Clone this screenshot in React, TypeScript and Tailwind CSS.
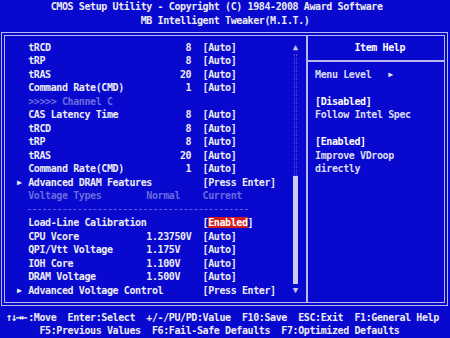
import React from "react";

// 80x25 text screen: one cell = 5.625px x 13.52px

interface ItemRow {
  arrow?: boolean;
  label: string;
  value?: string;
  valueLeft?: boolean;
  setting?: React.ReactNode;
  dim?: boolean;
  dashed?: boolean;
}

const rows: ItemRow[] = [
  { label: "tRCD", value: "8", setting: "[Auto]" },
  { label: "tRP", value: "8", setting: "[Auto]" },
  { label: "tRAS", value: "20", setting: "[Auto]" },
  { label: "Command Rate(CMD)", value: "1", setting: "[Auto]" },
  { label: ">>>>> Channel C", dim: true },
  { label: "CAS Latency Time", value: "8", setting: "[Auto]" },
  { label: "tRCD", value: "8", setting: "[Auto]" },
  { label: "tRP", value: "8", setting: "[Auto]" },
  { label: "tRAS", value: "20", setting: "[Auto]" },
  { label: "Command Rate(CMD)", value: "1", setting: "[Auto]" },
  { arrow: true, label: "Advanced DRAM Features", setting: "[Press Enter]" },
  { label: "Voltage Types", value: "Normal", valueLeft: true, setting: "Current", dim: true },
  { label: "", dashed: true },
  {
    label: "Load-Line Calibration",
    setting: (
      <>
        [<span className="bg-[#d41c1c] text-white">Enabled</span>]
      </>
    ),
  },
  { label: "CPU Vcore", value: "1.23750V", valueLeft: true, setting: "[Auto]" },
  { label: "QPI/Vtt Voltage", value: "1.175V", valueLeft: true, setting: "[Auto]" },
  { label: "IOH Core", value: "1.100V", valueLeft: true, setting: "[Auto]" },
  { label: "DRAM Voltage", value: "1.500V", valueLeft: true, setting: "[Auto]" },
  { arrow: true, label: "Advanced Voltage Control", setting: "[Press Enter]" },
];

function ListRow({ row }: { row: ItemRow }) {
  if (row.dashed) {
    return (
      <div className="flex h-[13.52px] items-center pl-[23.125px]">
        <div className="w-[219.375px] border-t border-dashed border-[#5c5cdc]" />
      </div>
    );
  }
  return (
    <div
      className={`flex h-[13.52px] items-center whitespace-pre ${
        row.dim ? "text-[#6a6ade]" : "text-[#ececf4]"
      }`}
    >
      <span className="w-[23.125px] pl-[11.875px] text-[8px]">
        {row.arrow ? "▶" : ""}
      </span>
      <span className="w-[118.125px]">{row.label}</span>
      <span className={`w-[45px] ${row.valueLeft ? "text-left" : "text-right"}`}>
        {row.value ?? ""}
      </span>
      <span className="w-[11.25px]" />
      <span className="w-[90px]">{row.setting ?? ""}</span>
    </div>
  );
}

export default function App() {
  return (
    <div className="h-[338px] w-[450px] overflow-hidden bg-[#0808cf] font-['DejaVu_Sans_Mono',monospace] text-[10px] font-bold leading-[13.52px] tracking-[-0.395px] text-[#ececf4]">
      {/* title */}
      <div className="h-[13.52px] whitespace-pre pl-[50.625px]">
        CMOS Setup Utility - Copyright (C) 1984-2008 Award Software
      </div>
      <div className="h-[13.52px] whitespace-pre pl-[140.625px]">
        MB Intelligent Tweaker(M.I.T.)
      </div>

      {/* main frame */}
      <div className="mt-[4.96px] ml-[1px] mr-[2px] flex h-[274px] border-4 border-double border-[#b8b8ec]">
        {/* settings list */}
        <div className="flex w-[298.75px] py-[4.56px]">
          <div className="w-[287.5px]">
            {rows.map((r, i) => (
              <ListRow key={i} row={r} />
            ))}
          </div>
          {/* scroll bar */}
          <div className="flex w-[5.625px] flex-col items-center text-[#c4c4f0]">
            <div className="flex h-[13.52px] items-center text-[9px]">▲</div>
            <div className="h-[121.68px] w-[3px] border-x border-dotted border-[#5050e4]" />
            <div className="h-[108.16px] w-[5px] bg-[#cacaf2]" />
            <div className="flex h-[13.52px] items-center text-[9px]">▼</div>
          </div>
          <div className="w-[5.625px]" />
        </div>

        {/* divider */}
        <div className="flex w-[5.625px] justify-center">
          <div className="w-[2px] bg-[#b8b8ec]" />
        </div>

        {/* item help */}
        <div className="flex-1 py-[4.56px]">
          <div className="h-[13.52px] whitespace-pre pl-[45px] text-white">Item Help</div>
          <div className="-ml-[3px] flex h-[13.52px] items-center">
            <div className="h-[2px] w-full bg-[#b8b8ec]" />
          </div>
          <div className="flex h-[13.52px] items-center whitespace-pre pl-[5.625px] text-[#dcdcf2]">
            <span className="w-[73.125px]">Menu Level</span>
            <span className="text-[8px]">▶</span>
          </div>
          <div className="h-[13.52px]" />
          <div className="h-[13.52px] whitespace-pre pl-[5.625px] text-white">[Disabled]</div>
          <div className="h-[13.52px] whitespace-pre pl-[5.625px] text-[#dcdcf2]">Follow Intel Spec</div>
          <div className="h-[13.52px]" />
          <div className="h-[13.52px] whitespace-pre pl-[5.625px] text-white">[Enabled]</div>
          <div className="h-[13.52px] whitespace-pre pl-[5.625px] text-[#dcdcf2]">Improve VDroop</div>
          <div className="h-[13.52px] whitespace-pre pl-[5.625px] text-[#dcdcf2]">directly</div>
        </div>
      </div>

      {/* key legend */}
      <div className="mt-[4.96px] flex h-[13.52px] whitespace-pre pl-[5.625px]">
        <span className="w-[22.5px] text-[11px] tracking-[-1.5px]">↑↓→←</span>
        <span>:Move  Enter:Select  +/-/PU/PD:Value  F10:Save  ESC:Exit  F1:General Help</span>
      </div>
      <div className="h-[13.52px] whitespace-pre pl-[39.375px]">
        F5:Previous Values  F6:Fail-Safe Defaults  F7:Optimized Defaults
      </div>
    </div>
  );
}
